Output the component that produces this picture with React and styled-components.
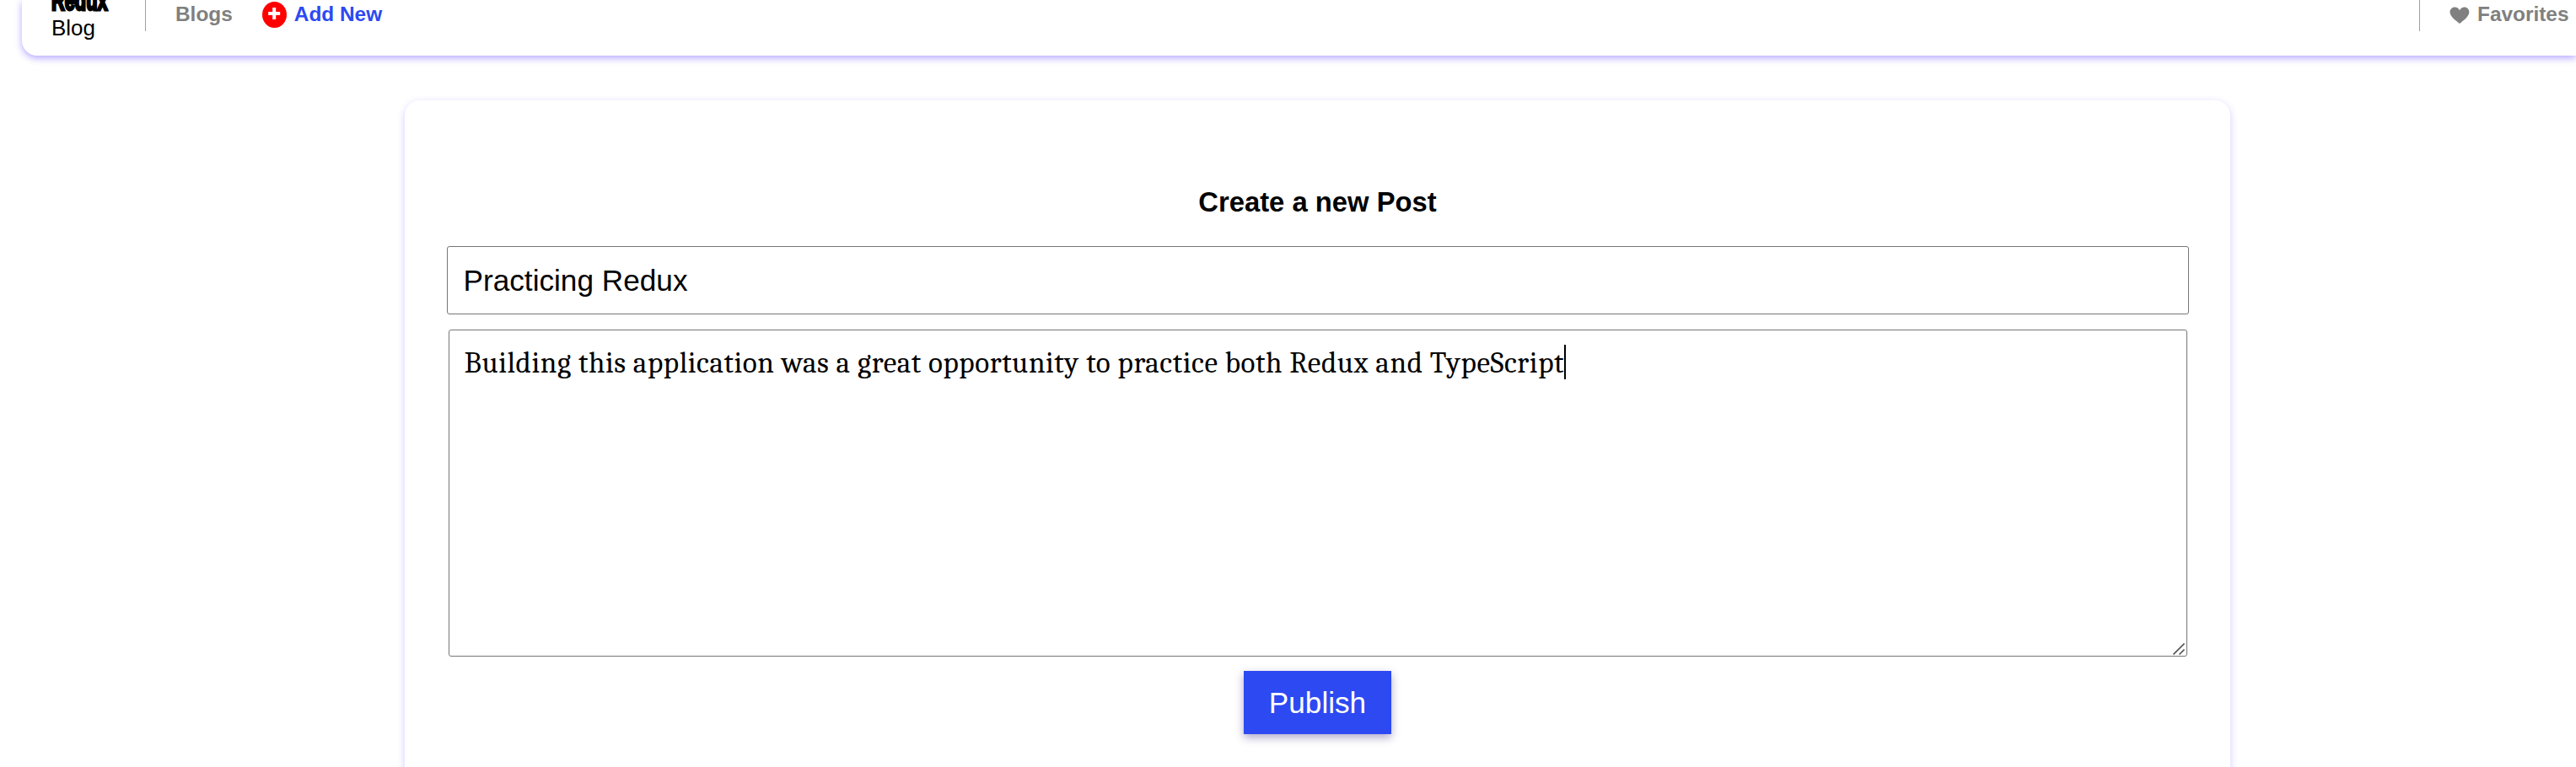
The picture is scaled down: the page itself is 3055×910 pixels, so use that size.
import React from "react";
import styled, { createGlobalStyle } from "styled-components";

const GlobalStyle = createGlobalStyle`
  * { box-sizing: border-box; }
  body {
    margin: 0;
    background: #fff;
    color: #000;
    font-family: "Liberation Sans", Arial, sans-serif;
    overflow: hidden;
  }
`;

const Page = styled.div`
  height: 910px;
  overflow: hidden;
`;

const Header = styled.header`
  display: flex;
  align-items: flex-start;
  height: 66px;
  margin-left: 26px;
  padding-left: 35px;
  background: #fff;
  border-bottom-left-radius: 18px;
  box-shadow: 0 3px 9px rgba(70, 40, 255, 0.4);
`;

const Logo = styled.div`
  display: flex;
  flex-direction: column;
  align-items: flex-start;
  width: 111px;
  margin-top: -18px;
`;

const LogoTop = styled.span`
  height: 36px;
  font: 700 33px/37px Impact, "Liberation Sans", sans-serif;
  -webkit-text-stroke: 3px #000;
  transform: scaleX(0.66);
  transform-origin: left;
`;

const LogoBottom = styled.span`
  font-size: 26px;
  line-height: 30px;
`;

const Divider = styled.span`
  width: 1px;
  height: 37px;
  background: #a0a0a0;
`;

const NavLink = styled.a`
  display: flex;
  align-items: center;
  height: 33px;
  margin-left: ${(p) => p.$gap}px;
  color: ${(p) => (p.$active ? "#2c49f2" : "#808080")};
  font-size: 24.4px;
  font-weight: 700;
  line-height: 33px;
  white-space: nowrap;

  svg { flex: none; margin-right: ${(p) => p.$iconGap || 0}px; }
`;

const NavEnd = styled.div`
  display: flex;
  width: 186px;
  margin-left: auto;
`;

const Card = styled.main`
  display: flex;
  flex-direction: column;
  align-items: center;
  width: 2165px;
  height: 860px;
  margin: 53px 0 0 480px;
  padding-top: 101px;
  background: #fff;
  border-radius: 18px;
  box-shadow: 0 3px 10px rgba(70, 40, 255, 0.24);
`;

const Title = styled.h1`
  margin: 0 0 32px;
  font-size: 32.8px;
  line-height: 40px;
`;

const Field = styled.div`
  width: 2066px;
  height: 81px;
  padding: 0 19px;
  border: 1px solid #767676;
  border-radius: 3px;
  font-size: 35.2px;
  line-height: 79px;
`;

const TextArea = styled.div`
  position: relative;
  display: flex;
  align-items: flex-start;
  width: 2062px;
  height: 388px;
  margin: 18px 0 17px;
  padding: 17px 18px;
  border: 1px solid #767676;
  border-radius: 3px;
  font: 35.2px/43px Cambria, Caladea, "Liberation Serif", serif;
  letter-spacing: 0.55px;
  white-space: nowrap;
`;

const Caret = styled.i`
  width: 2px;
  height: 41px;
  background: #000;
`;

const Grip = styled.svg`
  position: absolute;
  right: 2px;
  bottom: 1px;
`;

const Button = styled.button`
  width: 175px;
  height: 75px;
  padding: 0;
  border: 0;
  background: #2c49f2;
  color: #fff;
  font: 35.2px/75px "Liberation Sans", Arial, sans-serif;
  box-shadow: 0 4px 10px rgba(30, 10, 110, 0.36);
`;

export default function App() {
  return (
    <Page>
      <GlobalStyle />
      <Header>
        <Logo>
          <LogoTop>Redux</LogoTop>
          <LogoBottom>Blog</LogoBottom>
        </Logo>
        <Divider />
        <NavLink $gap={35}>Blogs</NavLink>
        <NavLink $gap={35} $iconGap={9} $active>
          <svg width="29" height="33" viewBox="0 0 29 33">
            <ellipse cx="14.5" cy="17.5" rx="14.5" ry="15.5" fill="#f00" />
            <path d="M14.2 9v14M7.2 16h14" stroke="#fff" strokeWidth="4" />
          </svg>
          Add New
        </NavLink>
        <NavEnd>
          <Divider />
          <NavLink $gap={35} $iconGap={9}>
            <svg width="24" height="22" viewBox="0 0 24 22">
              <path
                d="M12 22C9 19.500 0.500 14 0.500 8.500C0.500 5 3 2.500 6.300 2.500C8.800 2.500 11 4 12 6.300C13 4 15.200 2.500 17.700 2.500C21 2.500 23.300 5 23.300 8.500C23.300 14 15 19.500 12 22Z"
                fill="#808080"
              />
            </svg>
            Favorites
          </NavLink>
        </NavEnd>
      </Header>
      <Card>
        <Title>Create a new Post</Title>
        <Field>Practicing Redux</Field>
        <TextArea>
          <span>Building this application was a great opportunity to practice both Redux and TypeScript</span>
          <Caret />
          <Grip width="14" height="14" viewBox="0 0 14 14">
            <path d="M0.500 13.500L13.500 0.500M7.500 13.500L13.500 7.500" stroke="#555" strokeWidth="1.600" />
          </Grip>
        </TextArea>
        <Button>Publish</Button>
      </Card>
    </Page>
  );
}
